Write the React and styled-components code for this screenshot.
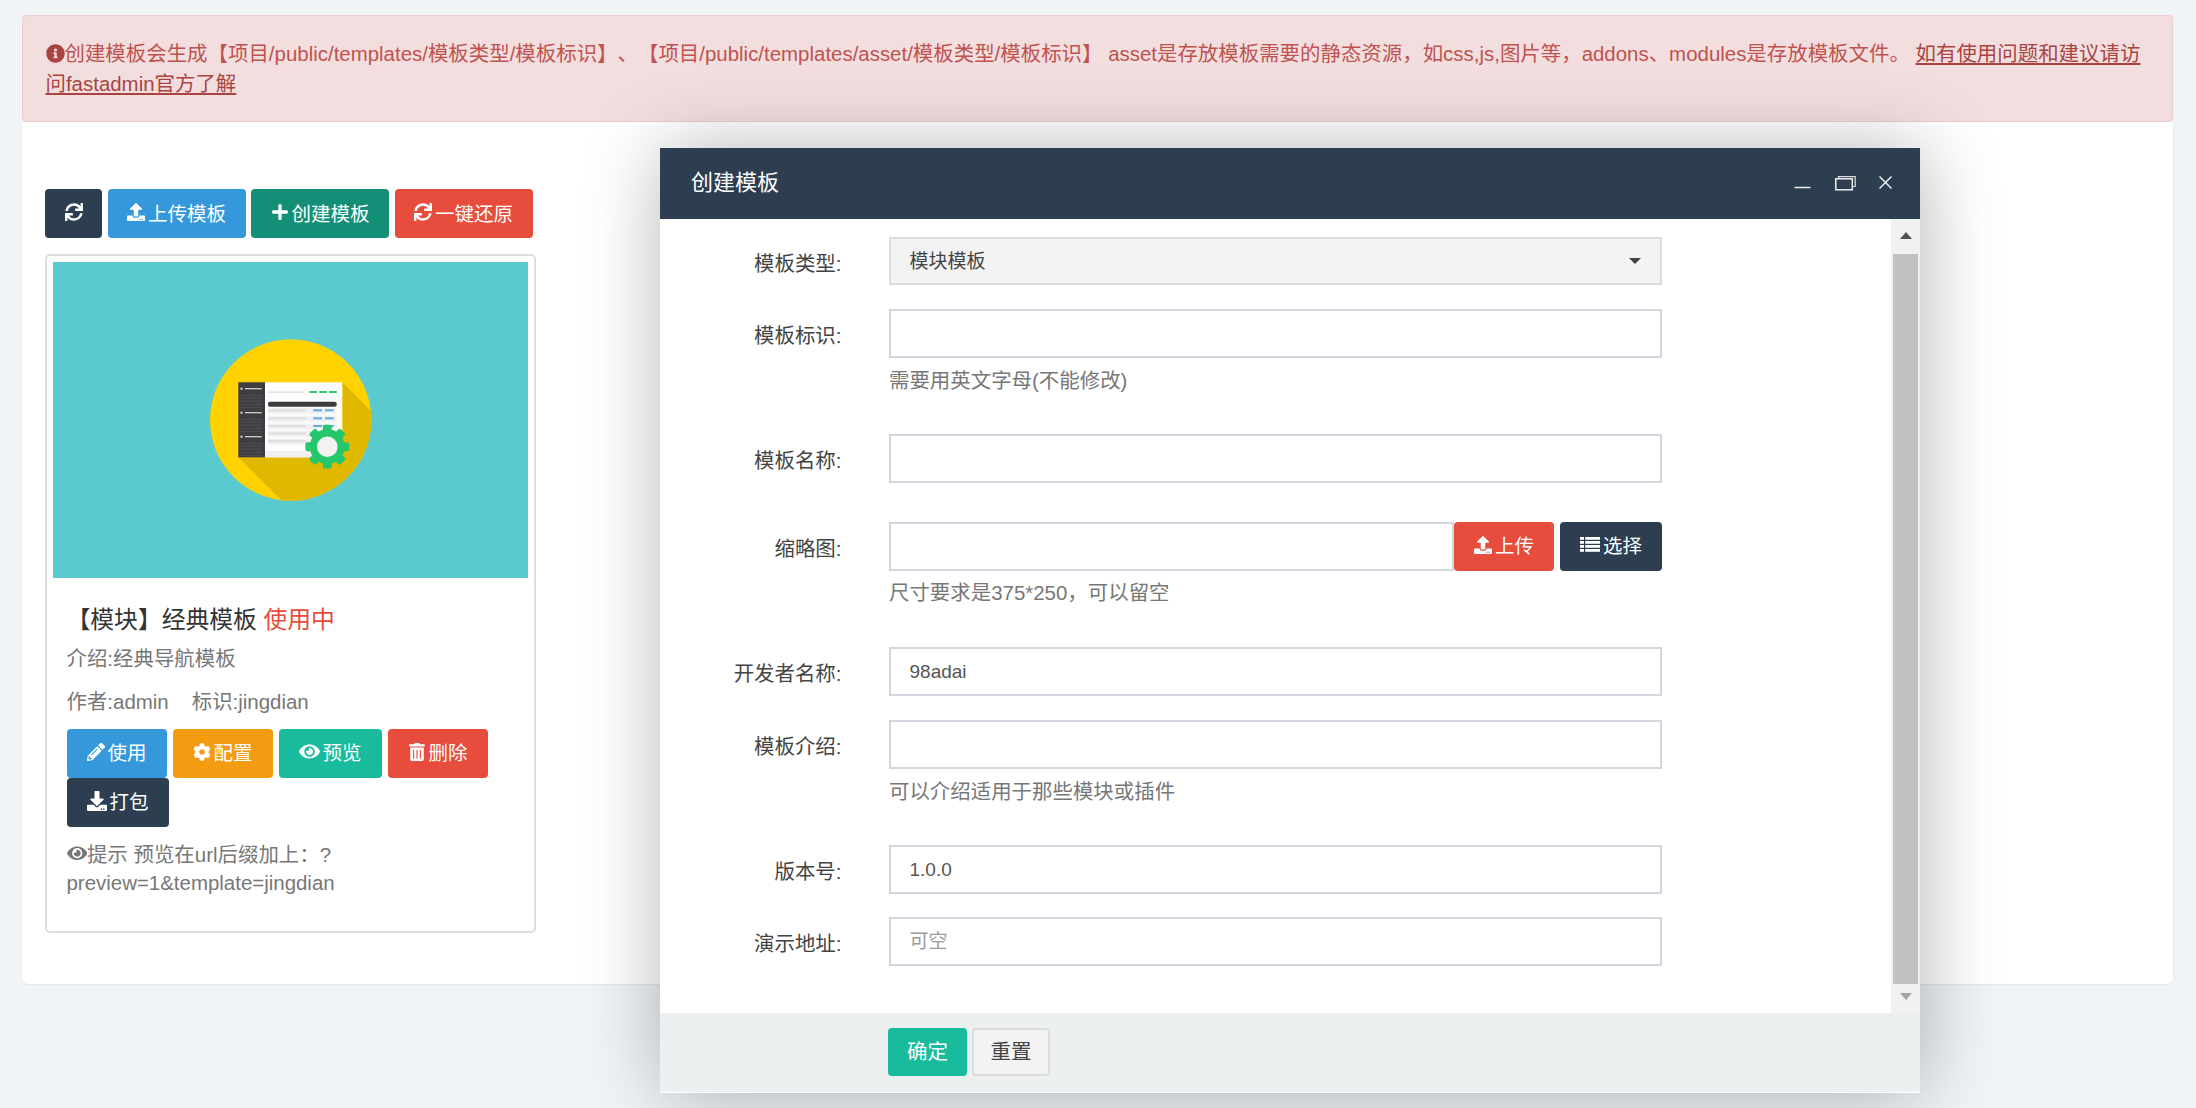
import React from "react";
import styled, { createGlobalStyle } from "styled-components";
import {
  FaSync, FaUpload, FaPlus, FaPencilAlt, FaCog, FaEye, FaTrashAlt, FaDownload, FaInfoCircle,
} from "react-icons/fa";

const GlobalStyle = createGlobalStyle`
  html, body {
    margin: 0;
    padding: 0;
    height: 1108px;
    overflow: hidden;
    background: #f0f4f7;
    font-family: "Liberation Sans", "Noto Sans CJK SC", sans-serif;
    font-size: 20.45px;
    color: #444;
    text-spacing-trim: space-all;
  }
  * { box-sizing: border-box; }
`;

const Page = styled.div`
  position: relative;
  height: 1108px;
  padding: 15px 23px 0 22px;
`;

const Alert = styled.div`
  border: 1.5px solid #ebcccc;
  border-radius: 4px;
  background: #f2dede;
  color: #c0524f;
  padding: 23px 22.5px 22px;
  line-height: 30px;

  svg {
    font-size: 19px;
    vertical-align: -2px;
    color: #a94442;
  }
  a {
    color: #a94442;
    text-decoration: underline;
  }
`;

const Panel = styled.div`
  background: #fff;
  border-radius: 0 0 6px 6px;
  box-shadow: 0 1px 2px rgba(0, 0, 0, 0.06);
  padding: 67px 23px 51px;
`;

const Toolbar = styled.div`
  display: flex;
  gap: 5.5px;
  margin-bottom: 16px;
`;

const Btn = styled.button`
  display: inline-flex;
  align-items: center;
  justify-content: center;
  gap: 3px;
  height: 49px;
  padding: 0 20px 3px;
  border: 0;
  border-radius: 4px;
  background: ${(props) => props.$bg};
  color: #fff;
  font: inherit;
  font-size: 19.5px;

  svg {
    font-size: 18px;
  }
`;

const ToolBtn = styled(Btn)`
  padding: 0 19.5px 3px;
`;

const Card = styled.div`
  width: 491px;
  height: 679px;
  border: 2.5px solid #ddd;
  border-radius: 5px;
  padding: 5.5px;
`;

const Thumb = styled.svg`
  display: block;
  width: 475px;
  height: 316px;
`;

const CardBody = styled.div`
  padding: 24px 14px 0;
`;

const CardTitle = styled.div`
  font-size: 23.8px;
  line-height: 36px;
  color: #333;
  margin-bottom: 6px;

  span {
    color: #e74c3c;
  }
`;

const Muted = styled.div`
  color: #777;
  line-height: 30px;
  margin-bottom: ${(props) => props.$mb || 0}px;
`;

const AuthorRow = styled(Muted)`
  display: flex;
  gap: 23px;
`;

const ActionWrap = styled.div`
  display: flex;
  flex-wrap: wrap;
  column-gap: 6px;
  margin-bottom: 14px;
`;

const Tip = styled.div`
  color: #777;
  line-height: 28px;

  svg {
    vertical-align: -2px;
  }
`;

const Modal = styled.div`
  position: absolute;
  left: 660px;
  top: 148px;
  width: 1260px;
  height: 945px;
  display: flex;
  flex-direction: column;
  background: #fff;
  padding-bottom: 1.5px;
  box-shadow: 1.5px 1.5px 75px rgba(0, 0, 0, 0.3);
`;

const ModalHeader = styled.div`
  flex: none;
  height: 71px;
  background: #2c3e50;
  color: #fff;
  display: flex;
  align-items: center;
  justify-content: space-between;
  padding: 0 28px 0 31px;
`;

const ModalTitle = styled.div`
  font-size: 22px;
  margin-bottom: 7px;
`;

const WindowIcons = styled.div`
  display: flex;
  align-items: center;
  gap: 23.5px;
  margin-bottom: 2px;
`;

const ModalBody = styled.div`
  flex: 1;
  min-height: 0;
  display: flex;
`;

const FormArea = styled.div`
  flex: 1;
  padding-top: 18px;
`;

const Row = styled.div`
  display: flex;
  margin-bottom: ${(props) => props.$mb}px;
`;

const Label = styled.div`
  flex: none;
  width: 181.5px;
  margin-right: 47.5px;
  padding-top: 12px;
  text-align: right;
  line-height: 30px;
  color: #444;
`;

const Field = styled.div`
  width: 773px;
`;

const InputLine = styled.div`
  display: flex;
  gap: 6px;
`;

const Input = styled.input`
  display: block;
  flex: 1;
  min-width: 0;
  width: 100%;
  height: 49px;
  margin: 0;
  padding: 0 18.5px;
  border: 2px solid #d2d6de;
  border-radius: 0;
  outline: none;
  background: #fff;
  color: #555;
  font: inherit;
  font-size: 19px;

  &::placeholder {
    color: #999;
  }
`;

const AddonInput = styled(Input)`
  margin-right: -6px;
`;

const Select = styled.div`
  position: relative;
  height: 48px;
  padding: 0 18.5px;
  border: 2px solid #ddd;
  background: #f3f3f3;
  color: #444;
  font-size: 19px;
  line-height: 45px;

  &::after {
    content: "";
    position: absolute;
    right: 19px;
    top: 19px;
    border-style: solid;
    border-width: 6px 6px 0;
    border-color: #444 transparent transparent;
  }
`;

const Help = styled.div`
  margin-top: 7.5px;
  margin-bottom: 15px;
  line-height: 30px;
  color: #777;
`;

const SideBar = styled.div`
  flex: none;
  width: 29px;
  display: flex;
  flex-direction: column;
  background: #f1f1f1;
`;

const SideArrow = styled.div`
  flex: none;
  height: ${(props) => (props.$down ? 29 : 35)}px;
  padding-bottom: 3px;
  display: flex;
  align-items: center;
  justify-content: center;

  &::before {
    content: "";
    border-left: 6.5px solid transparent;
    border-right: 6.5px solid transparent;
    ${(props) => (props.$down ? "border-top: 7px solid #a3a3a3;" : "border-bottom: 7px solid #505050;")}
  }
`;

const SideThumb = styled.div`
  flex: 1;
  margin: 0 2px;
  background: #c1c1c1;
`;

const ModalFooter = styled.div`
  flex: none;
  height: 79px;
  padding: 15px 0 0 228px;
  display: flex;
  align-items: flex-start;
  gap: 5px;
  background: #ecf0f1;
`;

const OkBtn = styled(Btn)`
  height: 48px;
  width: 79px;
  padding: 0 0 3px;
  font-size: 20.5px;
`;

const ResetBtn = styled(OkBtn)`
  width: 78px;
  border: 2px solid #ddd;
  color: #444;
`;

const GEAR_TEETH = [0, 45, 90, 135, 180, 225, 270, 315];

const ListIcon = () => (
  <svg width="20" height="15" viewBox="0 0 20 15" fill="#fff">
    {[0, 4, 8, 12].map((y) => (
      <g key={y}>
        <rect x="0" y={y} width="4" height="2.8" />
        <rect x="5.2" y={y} width="14.8" height="2.8" />
      </g>
    ))}
  </svg>
);

const ThumbArt = () => (
  <Thumb viewBox="0 0 475 316">
    <defs>
      <clipPath id="disc">
        <circle cx="237.7" cy="158" r="80.7" />
      </clipPath>
      <filter id="soft">
        <feGaussianBlur stdDeviation="0.6" />
      </filter>
    </defs>
    <rect width="475" height="316" fill="#5bcacf" />
    <g filter="url(#soft)">
      <circle cx="237.7" cy="158" r="80.7" fill="#ffd200" />
      <polygon points="289,120 345,176 345,245 235,245 185,195" fill="#e0b800" clipPath="url(#disc)" />
      <rect x="185.3" y="120.3" width="27" height="75" fill="#3e3e43" />
      <rect x="212" y="120.3" width="77.3" height="75" fill="#fdfdfd" />
      {[126.7, 150.7, 174.7].map((y) => (
        <g key={y}>
          <rect x="187.5" y={y - 1} width="2" height="2" fill="#ddd" />
          <rect x="192" y={y - 0.6} width="16.7" height="1.2" fill="#ddd" />
          {[6, 9, 12, 15, 18].map((d) => (
            <rect key={d} x="187.5" y={y + d} width="21" height="1" fill="#4f4f55" />
          ))}
        </g>
      ))}
      <rect x="215.3" y="129.5" width="35" height="1.3" fill="#ddd" />
      {[256.3, 266.3, 276].map((x) => (
        <rect key={x} x={x} y="129" width="7.8" height="2" fill="#2ecc71" />
      ))}
      <rect x="215" y="139.7" width="68.7" height="5" rx="2" fill="#3d3d3d" />
      {[148.3, 156.3, 164, 171.3, 179].map((y) => (
        <g key={y}>
          <rect x="215" y={y - 2.5} width="68.7" height="6" fill="#f0f0f0" />
          <rect x="215" y={y - 0.8} width="38" height="1.8" fill="#dcdcdc" />
          <rect x="260.3" y={y - 1} width="8.7" height="2" fill="#5dade2" />
          <rect x="272" y={y - 1} width="8.7" height="2" fill="#5dade2" />
        </g>
      ))}
      <rect x="212" y="189" width="77.3" height="6.3" fill="#f0f0f0" />
      {GEAR_TEETH.map((a) => (
        <rect
          key={a}
          x="269.8"
          y="162.8"
          width="9"
          height="10"
          rx="2"
          fill="#27c76b"
          transform={`rotate(${a} 274.3 184.7)`}
        />
      ))}
      <circle cx="274.3" cy="184.7" r="17.5" fill="#27c76b" />
      <circle cx="274.3" cy="184.7" r="10.3" fill="#f2f2f2" />
    </g>
  </Thumb>
);

const App = () => {
  return (
    <>
      <GlobalStyle />
      <Page>
        <Alert>
          <FaInfoCircle />创建模板会生成【项目/public/templates/模板类型/模板标识】、【项目/public/templates/asset/模板类型/模板标识】 asset是存放模板需要的静态资源，如css,js,图片等，addons、modules是存放模板文件。 <a>如有使用问题和建议请访问fastadmin官方了解</a>
        </Alert>
        <Panel>
          <Toolbar>
            <ToolBtn $bg="#2c3e50"><FaSync /></ToolBtn>
            <ToolBtn $bg="#3498db"><FaUpload />上传模板</ToolBtn>
            <ToolBtn $bg="#128f76"><FaPlus />创建模板</ToolBtn>
            <ToolBtn $bg="#e74c3c"><FaSync />一键还原</ToolBtn>
          </Toolbar>
          <Card>
            <ThumbArt />
            <CardBody>
              <CardTitle>【模块】经典模板 <span>使用中</span></CardTitle>
              <Muted $mb={13}>介绍:经典导航模板</Muted>
              <AuthorRow $mb={12}>
                <span>作者:admin</span>
                <span>标识:jingdian</span>
              </AuthorRow>
              <ActionWrap>
                <Btn $bg="#3498db"><FaPencilAlt />使用</Btn>
                <Btn $bg="#f39c12"><FaCog />配置</Btn>
                <Btn $bg="#18bc9c"><FaEye size={21} />预览</Btn>
                <Btn $bg="#e74c3c"><FaTrashAlt />删除</Btn>
                <Btn $bg="#2c3e50"><FaDownload size={20} />打包</Btn>
              </ActionWrap>
              <Tip><FaEye />提示 预览在url后缀加上：?<br />preview=1&amp;template=jingdian</Tip>
            </CardBody>
          </Card>
        </Panel>

        <Modal>
          <ModalHeader>
            <ModalTitle>创建模板</ModalTitle>
            <WindowIcons>
              <svg width="17" height="16" viewBox="0 0 17 16">
                <path d="M0.5 12.5H16.5" stroke="#eee" strokeWidth="1.5" fill="none" />
              </svg>
              <svg width="21" height="16" viewBox="0 0 21 16">
                <path d="M3.5 3V1.7H20.2V11.5H17.5" stroke="#ddd" strokeWidth="1.2" fill="none" />
                <rect x="0.8" y="3.8" width="16.5" height="11" stroke="#eee" strokeWidth="1.5" fill="none" />
              </svg>
              <svg width="13" height="13" viewBox="0 0 13 13">
                <path d="M0.5 0.5L12.5 12.5M12.5 0.5L0.5 12.5" stroke="#eee" strokeWidth="1.5" fill="none" />
              </svg>
            </WindowIcons>
          </ModalHeader>
          <ModalBody>
            <FormArea>
              <Row $mb={24}>
                <Label>模板类型:</Label>
                <Field><Select>模块模板</Select></Field>
              </Row>
              <Row $mb={23}>
                <Label>模板标识:</Label>
                <Field>
                  <Input />
                  <Help>需要用英文字母(不能修改)</Help>
                </Field>
              </Row>
              <Row $mb={39}>
                <Label>模板名称:</Label>
                <Field><Input /></Field>
              </Row>
              <Row $mb={24}>
                <Label>缩略图:</Label>
                <Field>
                  <InputLine>
                    <AddonInput />
                    <Btn $bg="#e74c3c"><FaUpload />上传</Btn>
                    <Btn $bg="#2c3e50"><ListIcon />选择</Btn>
                  </InputLine>
                  <Help>尺寸要求是375*250，可以留空</Help>
                </Field>
              </Row>
              <Row $mb={24}>
                <Label>开发者名称:</Label>
                <Field><Input defaultValue="98adai" /></Field>
              </Row>
              <Row $mb={23.5}>
                <Label>模板介绍:</Label>
                <Field>
                  <Input />
                  <Help>可以介绍适用于那些模块或插件</Help>
                </Field>
              </Row>
              <Row $mb={23}>
                <Label>版本号:</Label>
                <Field><Input defaultValue="1.0.0" /></Field>
              </Row>
              <Row $mb={0}>
                <Label>演示地址:</Label>
                <Field><Input placeholder="可空" /></Field>
              </Row>
            </FormArea>
            <SideBar>
              <SideArrow />
              <SideThumb />
              <SideArrow $down />
            </SideBar>
          </ModalBody>
          <ModalFooter>
            <OkBtn $bg="#18bc9c">确定</OkBtn>
            <ResetBtn $bg="#f3f3f3">重置</ResetBtn>
          </ModalFooter>
        </Modal>
      </Page>
    </>
  );
};

export default App;
